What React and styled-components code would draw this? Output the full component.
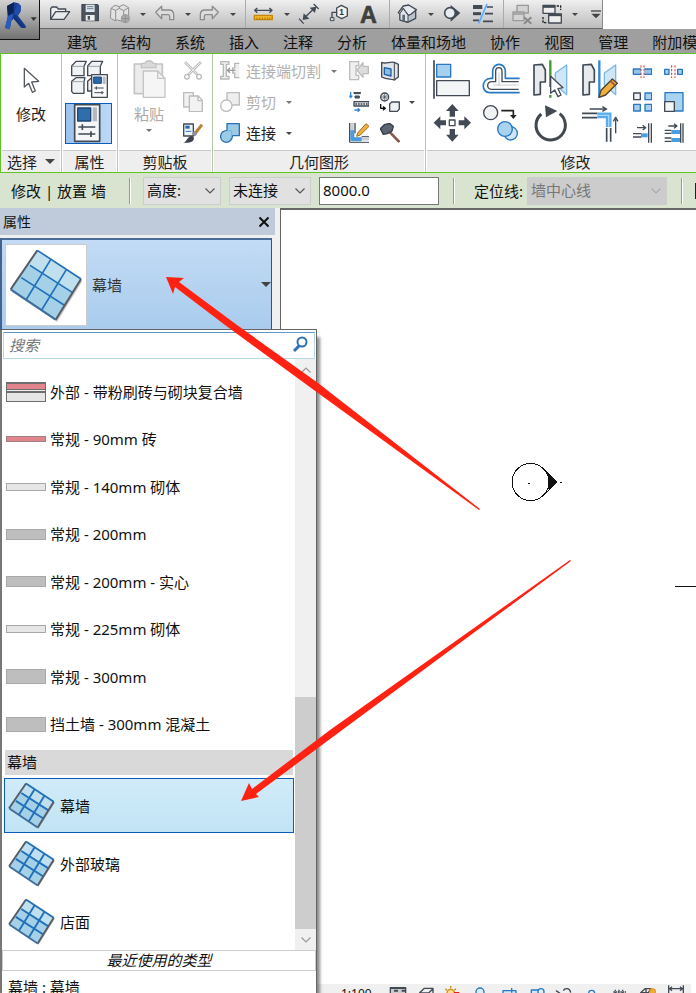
import React, { useState } from 'react';
import styled, { createGlobalStyle, css } from 'styled-components';

const fonts = {
  ui: `'Noto Sans', 'Noto Sans CJK SC', sans-serif`,
  cjk: `'Noto Sans CJK SC', 'Noto Sans', sans-serif`,
};

const colors = {
  green: '#5ec421',
  slate: '#414a55',
  blue: '#2a78c2',
  accent: '#0a5cb8',
  faded: '#c4c4c4',
  red: '#ff2213',
  edge: '#666666',
};

const GlobalStyle = createGlobalStyle`
  * {
    box-sizing: border-box;
  }
  body {
    margin: 0;
    background: #fff;
    color: #111;
    font-family: ${fonts.ui};
    font-size: 15px;
    line-height: 20px;
  }
  button, input, select {
    font: inherit;
    color: inherit;
  }
  button {
    padding: 0;
    border: 0;
    background: none;
    white-space: nowrap;
  }
  ul {
    margin: 0;
    padding: 0;
    list-style: none;
  }
  svg {
    display: block;
    flex: none;
  }
`;

const flexCenter = css`
  display: flex;
  align-items: center;
  justify-content: center;
`;

const Shell = styled.div`
  position: relative;
  display: flex;
  flex-direction: column;
  height: 100vh;
  overflow: hidden;
`;

/* ---- title bar ---- */
const TitleBar = styled.header`
  display: flex;
  flex: none;
  height: 29px;
`;
const QuickAccess = styled.div`
  display: flex;
  flex: none;
  width: 603px;
  padding-left: 45px;
  border-right: 1px solid #8a8a8a;
  border-bottom: 1px solid #666;
  background: linear-gradient(#efefef, #bdbdbd);
`;
const QatButton = styled.button`
  flex: none;
  ${flexCenter};
  width: 30px;
`;
const QatArrow = styled.button`
  flex: none;
  ${flexCenter};
  width: 15px;
`;
const QatDivider = styled.span`
  flex: none;
  width: 9px;
  border-right: 3px solid transparent;
  background: linear-gradient(#aaa, #aaa) right / 1px 100% no-repeat;
  background-origin: padding-box;
`;
const AppMenuButton = styled.button`
  position: absolute;
  top: 0;
  left: 0;
  z-index: 2;
  width: 40px;
  height: 40px;
  border-right: 1px solid #111;
  border-bottom: 1px solid #111;
  background: linear-gradient(#d2d2d2, #727272);
`;

/* ---- ribbon ---- */
const Tabs = styled.nav`
  display: flex;
  flex: none;
  gap: 24px;
  height: 24px;
  padding-left: 67px;
  background: #9f9f9f;
  overflow: hidden;
`;
const Tab = styled.button`
  flex: none;
  padding-top: 2px;
  font-family: ${fonts.cjk};
  line-height: 20px;
`;
const Ribbon = styled.section`
  display: flex;
  flex: none;
  height: 120px;
  border: 1px solid ${colors.green};
  border-right: 0;
  overflow: hidden;
`;
const Panel = styled.div`
  display: flex;
  flex: ${({ $width }) => ($width ? 'none' : '1 0 300px')};
  flex-direction: column;
  width: ${({ $width }) => ($width ? `${$width}px` : 'auto')};
  border-right: 1px solid #b5c9ad;
`;
const PanelBody = styled.div`
  display: flex;
  flex: 1;
  padding: ${({ $pad }) => $pad || 0};
  gap: ${({ $gap }) => $gap || 0}px;
`;
const PanelTitle = styled.div`
  ${flexCenter};
  gap: 8px;
  height: 22px;
  margin: 0 1px;
  border-top: 1px solid #c9c9c9;
  background: #eee;
  color: #222;
`;
const LargeTool = styled.button`
  display: flex;
  flex: none;
  flex-direction: column;
  align-items: center;
  width: ${({ $width }) => $width}px;
  color: ${({ disabled }) => (disabled ? '#aaa' : '#222')};
`;
const ToolLabel = styled.span`
  margin: 6px 0 5px;
`;
const ToolStack = styled.div`
  display: flex;
  flex-direction: column;
  gap: ${({ $gap }) => $gap}px;
`;
const PaletteTool = styled.button`
  ${flexCenter};
  width: 47px;
  height: 41px;
  border: 1px solid ${({ $active }) => ($active ? colors.accent : 'transparent')};
  background: ${({ $active }) => ($active ? 'linear-gradient(90deg, #9cc3ee, #bcd8f5)' : 'none')};
`;
const SmallTool = styled.button`
  display: flex;
  align-items: center;
  gap: 6px;
  height: 20px;
  color: ${({ disabled }) => (disabled ? '#b0b0b0' : '#222')};
  > svg + svg {
    margin-left: 3px;
  }
`;
const ToolText = styled.span`
  margin-right: 4px;
`;
const ToolGrid = styled.div`
  display: grid;
  flex: none;
  align-content: start;
  grid-template-columns: ${({ $cols }) => $cols};
  column-gap: ${({ $x }) => $x || 0}px;
  row-gap: ${({ $y }) => $y}px;
  padding-top: ${({ $top }) => $top || 0}px;
`;

/* ---- options bar ---- */
const OptionsBar = styled.form`
  display: flex;
  flex: none;
  align-items: center;
  height: 35px;
  padding-left: 11px;
  background: #d8e4d0;
  overflow: hidden;
`;
const OptionsTitle = styled.span`
  flex: none;
  width: 118px;
`;
const Divider = styled.span`
  flex: none;
  width: 2px;
  height: 26px;
  margin-right: ${({ $after }) => $after}px;
  border-left: 1px solid #999;
  border-right: 1px solid #fff;
`;
const SelectBox = styled.span`
  display: grid;
  flex: none;
  align-items: center;
  width: ${({ $width }) => $width}px;
  height: 28px;
  margin-right: ${({ $after }) => $after}px;
  border: 1px solid #ccc;
  background: ${({ $disabled }) => ($disabled ? '#ccc' : '#e1e1e1')};
  color: ${({ $disabled }) => ($disabled ? '#777' : '#111')};
  > * {
    grid-area: 1 / 1;
  }
  > svg {
    justify-self: end;
    margin-right: 4px;
    pointer-events: none;
  }
`;
const Select = styled.select`
  width: 100%;
  padding: 0 0 2px 3px;
  border: 0;
  background: none;
  appearance: none;
  opacity: 1;
`;
const HeightInput = styled.input`
  flex: none;
  width: 120px;
  height: 28px;
  margin-right: 14px;
  padding: 0 3px 2px;
  border: 1px solid #777;
  background: #fff;
`;
const OptionLabel = styled.label`
  flex: none;
  width: 53px;
`;
const ChainCheck = styled.input`
  flex: none;
  width: 16px;
  height: 16px;
  margin: 0;
  border: 1px solid #222;
  background: #fff;
  appearance: none;
`;

/* ---- workspace ---- */
const Workspace = styled.main`
  display: flex;
  flex: 1;
  min-height: 0;
`;
const Properties = styled.aside`
  display: flex;
  flex: none;
  flex-direction: column;
  width: 280px;
  background: #f0f0f0;
`;
const PropertiesHeader = styled.div`
  display: flex;
  align-items: center;
  justify-content: space-between;
  width: 275px;
  height: 27px;
  padding: 0 5px 0 3px;
  background: #bfcbda;
  font-size: 14px;
`;
const TypeSelector = styled.button`
  display: flex;
  align-items: center;
  width: 272px;
  height: 92px;
  margin-top: 3px;
  padding: 0 0 0 3px;
  border: 1px solid ${colors.accent};
  border-top: 2px solid #4b6d99;
  border-left: 2px solid #44648f;
  background: linear-gradient(#c3dbf5, #a9cced);
  color: #333;
  text-align: left;
`;
const TypeThumb = styled.span`
  ${flexCenter};
  width: 82px;
  height: 82px;
  margin-right: 5px;
  border: 1px solid #ccc;
  background: #fff;
`;
const TypeName = styled.span`
  flex: 1;
`;
const MenuAnchor = styled.div`
  position: relative;
  flex: 1;
  min-height: 0;
  border-left: 2px solid #777;
`;
const TypeMenu = styled.div`
  position: absolute;
  z-index: 3;
  top: -1px;
  bottom: 0;
  left: 0;
  display: flex;
  flex-direction: column;
  width: 315px;
  border-top: 1px solid ${colors.edge};
  border-right: 1px solid ${colors.edge};
  background: #fff;
  box-shadow: 3px 8px 3px rgba(0, 0, 0, 0.45);
`;
const SearchBox = styled.label`
  display: flex;
  flex: none;
  align-items: center;
  height: 27px;
  margin: 2px 1px 0;
  padding: 0 5px 2px;
  border: 1px solid #b9d9ea;
  border-top-color: #5d97c8;
`;
const SearchInput = styled.input`
  flex: 1;
  min-width: 0;
  padding: 0;
  border: 0;
  outline: 0;
  background: none;
  font-style: italic;
  &::placeholder {
    color: #777;
    opacity: 1;
  }
`;
const ListArea = styled.div`
  display: flex;
  flex: none;
  height: 591px;
`;
const ListColumn = styled.div`
  flex: 1;
  padding: 9px 1px 0 2px;
`;
const WallList = styled.ul`
  display: grid;
  grid-auto-rows: 1fr;
  height: 380px;
`;
const WallItem = styled.button`
  display: flex;
  align-items: center;
  gap: 4px;
  width: 100%;
  height: 100%;
  padding-left: 2px;
`;
const GroupTitle = styled.h3`
  height: 25px;
  margin: 2px 1px 3px;
  padding-left: 2px;
  background: #d9d9d9;
  font-size: 15px;
  font-weight: 400;
  line-height: 24px;
`;
const CurtainList = styled.ul`
  display: grid;
  gap: 3px;
`;
const CurtainItem = styled.button`
  display: flex;
  align-items: center;
  gap: 5px;
  width: 100%;
  height: 55px;
  padding-left: 3px;
  border: 1px solid ${({ $selected }) => ($selected ? colors.accent : 'transparent')};
  background: ${({ $selected }) => ($selected ? 'linear-gradient(#d1ebfa, #c1e4f5)' : 'none')};
`;
const ScrollBar = styled.div`
  display: flex;
  flex: none;
  flex-direction: column;
  width: 21px;
  background: #f0f0f0;
`;
const ScrollArrow = styled.button`
  ${flexCenter};
  height: 21px;
`;
const ScrollThumb = styled.div`
  height: 232px;
  margin-top: auto;
  background: #cdcdcd;
`;
const RecentTitle = styled.div`
  flex: none;
  height: 21px;
  border: 1px solid #ccc;
  font-style: italic;
  line-height: 19px;
  text-align: center;
`;
const RecentItem = styled.button`
  flex: none;
  height: 32px;
  padding-left: 6px;
  text-align: left;
`;

const ViewPane = styled.section`
  display: flex;
  flex: 1;
  flex-direction: column;
  min-width: 0;
  border-top: 2px solid ${colors.edge};
  border-left: 1px solid ${colors.edge};
`;
const Drawing = styled.div`
  flex: 1;
  min-height: 0;
  overflow: hidden;
  background: #fff;
`;
const ViewControls = styled.footer`
  display: flex;
  flex: none;
  height: 9px;
  margin-right: 5px;
  padding-left: 60px;
  background: #f0f0f0;
  overflow: hidden;
`;
const ScaleButton = styled.button`
  flex: none;
  align-self: flex-start;
  width: 43px;
  font-size: 12px;
  line-height: 20px;
  text-align: left;
`;
const ViewControl = styled.button`
  flex: none;
  align-self: flex-start;
  width: 28px;
`;
const Markup = styled.svg`
  position: absolute;
  z-index: 5;
  top: 0;
  left: 0;
  pointer-events: none;
`;

const Icon = ({ x, y, w, h = w, children }) => (
  <svg
    width={w}
    height={h}
    viewBox={`${x} ${y} ${w * 3} ${h * 3}`}
    fill="none"
    stroke={colors.slate}
    strokeWidth="4"
    strokeLinejoin="round"
    aria-hidden="true"
  >
    {children}
  </svg>
);

const Triangle = ({ size = 7, color = '#444' }) => (
  <svg width={size} height={Math.ceil(size / 2)} viewBox="0 0 8 4" preserveAspectRatio="none" aria-hidden="true">
    <path d="M0 0h8L4 4z" fill={color} />
  </svg>
);

const Chevron = ({ up, color = '#555' }) => (
  <svg width="12" height="8" viewBox="0 0 12 8" aria-hidden="true">
    <path d={up ? 'M1.500 6.500L6 2l4.500 4.500' : 'M1.500 1.500L6 6l4.500-4.500'} fill="none" stroke={color} strokeWidth="1.200" />
  </svg>
);

const CurtainWallIcon = ({ size, fine }) => (
  <svg width={size} height={size} viewBox="28 229 222 222" aria-hidden="true">
    <path d="M117 242l131 86-76 122L37 361z" fill="#000" opacity=".25" />
    <path d="M113 236l131 86-76 122L33 353z" fill="#a5d1e8" />
    <path d="M113 236l131 86-25 40L88 275z" fill="#d2e9f5" opacity=".6" />
    <g stroke="#2171ba" strokeWidth={fine ? 9 : 5} fill="none">
      <path d="M153 264L79 385M200 294l-74 121M91 281l128 82M65 318l128 82" />
      <path d="M113 236l131 86" />
    </g>
    <path d="M113 236L33 353M244 322l-76 122" stroke="#555d66" strokeWidth={fine ? 9 : 6} />
    <path d="M33 353l135 91" stroke="#3d6d9c" strokeWidth={fine ? 8 : 6} />
  </svg>
);

const RevitLogo = () => (
  <Icon x={0} y={0} w={39}>
    <g stroke="none">
      <path d="M21 18l21-11 13 3 8 8-1 16-8 13 24 32-3 5-12-1-22-27-7 6-5 26-14-4 8-34z" fill="#193f95" />
      <path d="M21 18l21-11-1 33-17 8z" fill="#0d2456" />
      <path d="M41 40l13-30 8 8-1 16-8 13z" fill="#1f4cab" />
      <path d="M24 48l17-8-7 22-5 26-14-4z" fill="#285ac0" />
      <path d="M41 40l37 44-12-1-25-27z" fill="#15347e" />
    </g>
    <path d="M92 52h18l-9 11z" fill="#333" stroke="none" />
  </Icon>
);

/* Quick access glyphs, drawn on a 3x grid of the toolbar */
const QatOpen = () => (
  <Icon x={135} y={0} w={30} h={28}>
    <path d="M152 58V26l4-5h14l5 6h22v8" fill="#eee" />
    <path d="M152 58l15-23h42l-17 23z" fill="#e8ebee" />
  </Icon>
);
const QatSave = () => (
  <Icon x={225} y={0} w={30} h={28}>
    <path d="M246 14h46l3 3v45h-49z" fill="#4c545f" />
    <path d="M257 14h27v22h-27z" fill="#dce6ef" stroke="none" />
    <path d="M261 20h19M261 26h19" strokeWidth="2" />
    <path d="M257 45h27v17h-27z" fill="#eee" stroke="none" />
    <path d="M263 48h7v11h-7z" fill="#4c545f" stroke="none" />
  </Icon>
);
const QatCube = () => (
  <Icon x={315} y={0} w={30} h={28}>
    <g stroke="#8f8f8f" strokeWidth="3" fill="#e2e2e2">
      <path d="M333 25l12-9 13 4 12-6 16 9v28l-19 13-14-4-8 2-14-8z" />
      <path d="M333 25l14 6 11-6 13 7 15-9M347 31v29M371 32v30M358 25v-5" />
    </g>
    <circle cx="376" cy="56" r="12" fill="#aaa" stroke="#999" strokeWidth="3" />
    <path d="M364 56h24M376 44v24" stroke="#888" strokeWidth="2" />
  </Icon>
);
const QatUndo = () => (
  <Icon x={450} y={0} w={30} h={28}>
    <path d="M467 37l18-18v11h22c10 0 14 7 14 14v15h-12V49c0-3-2-5-5-5h-19v12z" fill="#ddd" stroke="#8c8c8c" />
  </Icon>
);
const QatRedo = () => (
  <Icon x={585} y={0} w={30} h={28}>
    <path d="M655 37l-18-18v11h-22c-10 0-14 7-14 14v15h12V49c0-3 2-5 5-5h19v12z" fill="#ddd" stroke="#8c8c8c" />
  </Icon>
);
const QatMeasure = () => (
  <Icon x={57} y={0} w={30} h={28}>
    <path d="M75 31h50M82 24l-8 7 8 7M118 24l8 7-8 7" />
    <path d="M73 46h54v13H73z" fill="#f0b429" stroke="#c98608" />
    <path d="M81 53v5M89 53v5M97 53v5M105 53v5M113 53v5M120 53v5" stroke="#7c5200" strokeWidth="2" />
  </Icon>
);
const QatDimension = () => (
  <Icon x={192} y={0} w={30} h={28}>
    <path d="M222 55l31-30" />
    <path d="M218 60l3-20 17 16zM259 20l-20 3 16 16z" fill={colors.slate} stroke="none" />
    <path d="M207 56l14 15M251 12l15 15" />
  </Icon>
);
const QatTag = () => (
  <Icon x={282} y={0} w={30} h={28}>
    <path d="M320 24l14-8 18 9v23l-17 8-15-8z" fill="#f2f2f2" />
    <path d="M319 37h-13v19" />
    <path d="M301 53h11v9h-11z" fill="#ddd" strokeWidth="3" />
    <text x="335" y="45" fill="#333" stroke="none" fontFamily="Liberation Sans, sans-serif" fontWeight="700" fontSize="25" textAnchor="middle">1</text>
  </Icon>
);
const QatText = () => (
  <Icon x={372} y={0} w={30} h={28}>
    <text x="415" y="69" fill="#3f3f3f" stroke="#3f3f3f" strokeWidth="2" fontFamily="Liberation Sans, sans-serif" fontWeight="700" fontSize="70" textAnchor="middle">A</text>
  </Icon>
);
const QatHouse = () => (
  <Icon x={489} y={0} w={30} h={28}>
    <path d="M510 40v20l23 7 24-12V32l-8-4" fill="#b9c2cd" />
    <path d="M505 38l15-20 16-3 23 14-15 13-9 4-15-20-9 16z" fill="#e6ebf0" />
    <path d="M510 40l10-14 14 20v20l-24-6z" fill="#dfe4ea" strokeWidth="3" />
    <path d="M517 44h8v20l-8-3z" fill="#5d6774" stroke="none" />
  </Icon>
);
const QatSection = () => (
  <Icon x={624} y={0} w={30} h={28}>
    <path d="M662 15l29 24-29 26z" fill={colors.slate} stroke="none" />
    <circle cx="660" cy="39" r="16" fill="#e9edf1" strokeWidth="5" />
  </Icon>
);
const QatThin = () => (
  <Icon x={24} y={0} w={30} h={28}>
    <path d="M39 21h28" strokeWidth="12" />
    <path d="M39 41h24" strokeWidth="9" />
    <path d="M39 61h18M80 21h19M75 41h24M69 64h30" strokeWidth="5" />
    <path d="M81 12L56 70" stroke="#5aaeff" strokeWidth="5" />
  </Icon>
);
const QatCloseHidden = () => (
  <Icon x={141} y={0} w={30} h={28}>
    <g stroke="#9a9a9a" fill="#d3d3d3">
      <path d="M171 16h34v23h-34z" />
      <path d="M159 36h33v26h-33zM159 42h33" />
      <path d="M192 52l22 19M214 52l-22 19" stroke="#888" strokeWidth="6" />
    </g>
  </Icon>
);
const QatSwitch = () => (
  <Icon x={231} y={0} w={30} h={28}>
    <path d="M249 16h36v24h-36z" fill="#eee" />
    <path d="M249 20h36" strokeWidth="7" />
    <path d="M266 42h38v27h-38z" fill="#eee" />
    <path d="M266 45h38" strokeWidth="7" />
    <path d="M290 18h12v12M249 51v17h12" stroke="#222" strokeDasharray="7 3" />
  </Icon>
);
const QatCustomize = () => (
  <Icon x={366} y={0} w={20} h={28}>
    <path d="M378 33h30" stroke="#444" />
    <path d="M379 41h28l-14 14z" fill="#444" stroke="none" />
  </Icon>
);

/* Ribbon glyphs */
const CursorIcon = () => (
  <Icon x={61} y={39} w={20} h={31}>
    <path d="M71 43v56l13-11 11 27 9-4-11-27 21-2z" fill="#fff" stroke="#565b62" />
  </Icon>
);
const TypePropsIcon = () => (
  <Icon x={202} y={19} w={40}>
    <g fill="#f1f2f4">
      <path d="M210 40l13-14h31l-7 15v28h-37z" />
      <path d="M258 40l12-14h33l-7 15v28h-38z" />
      <path d="M210 86l13-11h27l-3 11v36h-32l-5-6z" />
      <path d="M258 86l12-11h25v40h-37z" />
      <path d="M210 41h37M258 41h38M210 87h37" strokeWidth="3" stroke="#9aa0a8" />
    </g>
    <path d="M270 66h47v68h-47z" fill="#fbfbfb" />
    <path d="M276 73h23v19h-23z" fill="#2d68a8" stroke="#1c4a80" strokeWidth="3" />
    <path d="M303 72h9v22h-9z" fill="#b7bcc4" stroke="none" />
    <path d="M278 106h28M284 101v10M278 120h28M301 115v10" strokeWidth="3" />
  </Icon>
);
const PropertiesIcon = () => (
  <Icon x={205} y={156} w={40} h={39}>
    <path d="M222 158h75v110h-75z" fill="#f5f6f8" strokeWidth="5" />
    <path d="M231 168h39v39h-39z" fill="#2f6dad" stroke="#1c4676" />
    <path d="M276 166h13v42h-13z" fill="#b5b9c1" stroke="none" />
    <path d="M233 225h51M245 217v17M233 246h51M271 238v17" strokeWidth="5" />
  </Icon>
);
const PasteIcon = () => (
  <Icon x={387} y={15} w={40}>
    <g stroke={colors.faded}>
      <path d="M403 33h84v89h-84z" fill="#ececec" strokeWidth="5" />
      <path d="M424 44V32l12-2c2-9 20-9 22 0l10 2v12z" fill="#d9d9d9" strokeWidth="4" />
      <path d="M430 54h43l22 22v57h-65z" fill="#f5f5f5" />
      <path d="M473 54v22h22" />
    </g>
  </Icon>
);
const CutIcon = () => (
  <Icon x={549} y={27} w={20}>
    <g stroke="#bdbdbd">
      <path d="M555 30l39 40M603 30l-40 40" strokeWidth="8" />
      <path d="M555 30l39 40M603 30l-40 40" stroke="#eee" strokeWidth="3" />
      <circle cx="561" cy="74" r="7" />
      <circle cx="597" cy="74" r="7" />
    </g>
  </Icon>
);
const CopyClipIcon = () => (
  <Icon x={549} y={120} w={20}>
    <g stroke="#bcbcbc" fill="#f2f2f2">
      <path d="M551 122h29v43h-29z" />
      <path d="M568 132h27l12 13v34h-39zM594 132v14h13" />
    </g>
  </Icon>
);
const MatchIcon = () => (
  <Icon x={549} y={213} w={20}>
    <path d="M551 216h29v36h-29z" fill="#eef3f8" />
    <path d="M556 221h13v9h-13z" fill="#2a68ae" stroke="none" />
    <path d="M557 238h17" stroke={colors.blue} strokeWidth="3" />
    <path d="M606 218l-22 28" stroke="#b78232" strokeWidth="9" />
    <path d="M588 241l-8 8" stroke="#8a929c" strokeWidth="12" />
    <path d="M549 272c10 0 13-19 25-20 9 0 10 10 4 15-8 6-18 5-29 5z" fill="#3a424d" stroke="none" />
  </Icon>
);
const CopeIcon = () => (
  <Icon x={30} y={27} w={20}>
    <g stroke="#b9b9b9" fill="#eee">
      <path d="M32 29h25v8h-8v36h8v8H32v-8h8V37h-8z" />
      <path d="M88 34H74v14h-6v15h6v14h14" />
      <path d="M76 55H53M60 48l-8 7 8 7" stroke="#999" />
    </g>
  </Icon>
);
const CutGeometryIcon = () => (
  <Icon x={30} y={120} w={20}>
    <g stroke="#bdbdbd">
      <path d="M51 122h37v37H51z" fill="#eee" />
      <circle cx="49" cy="161" r="17" fill="#fff" />
    </g>
  </Icon>
);
const JoinIcon = () => (
  <Icon x={30} y={213} w={20}>
    <path d="M51 215h37v36H68c-2 12-10 20-20 20-21-2-23-33 3-36z" fill="#9ccbe7" stroke="#2b71b2" />
    <path d="M51 236h14v16" stroke="#7fb4d8" strokeWidth="3" />
  </Icon>
);
const WallJoinIcon = () => (
  <Icon x={417} y={27} w={20}>
    <g stroke="#bcbcbc" fill="#f0f0f0">
      <path d="M419 29h27v12h-8v29h8v13h-27z" />
      <path d="M475 43h-16V32l-18 22 18 22V65h16z" fill="#ddd" />
    </g>
  </Icon>
);
const FaceIcon = () => (
  <Icon x={510} y={27} w={20}>
    <path d="M515 31c13 7 24-4 38 0l12 6v38l-12 9c-14-4-22-1-38-9z" fill="#e1e4e8" />
    <path d="M553 31v52" strokeWidth="3" />
    <path d="M523 47l20 4v21l-20-5z" fill="#8cbde0" stroke="#1d62a7" />
  </Icon>
);
const BeamIcon = () => (
  <Icon x={417} y={120} w={20}>
    <path d="M422 120v16M418 131l4 6 5-6M433 174h15M443 169l6 5-6 5" stroke="#2f88dd" />
    <path d="M432 120h19v5h-19zM435 132h13v6h-13z" fill="#555" strokeWidth="3" />
    <path d="M432 149h45v13h-45z" fill="#ddd" />
    <path d="M436 156h41" strokeDasharray="5 3" />
  </Icon>
);
const SplitFaceIcon = () => (
  <Icon x={510} y={120} w={20}>
    <circle cx="524" cy="135" r="12" fill="#eee" />
    <path d="M516 127l16 16M532 127l-16 16M524 123v24M512 135h24" strokeWidth="2" />
    <path d="M512 156v13h12M519 164l7 5-7 6" stroke="#111" />
    <path d="M539 156l6-6h23v21l-6 7h-23z" fill="#eef0f3" />
  </Icon>
);
const SketchIcon = () => (
  <Icon x={417} y={213} w={20}>
    <path d="M419 213v58M435 213v31" strokeWidth="4" />
    <path d="M427 213v48h50" stroke="#c9ced4" strokeWidth="9" />
    <path d="M427 235v27h28" stroke="#4a9be0" strokeWidth="12" />
    <path d="M419 271h58M455 254h22" strokeWidth="3" />
    <path d="M443 243l25-28 9 8-26 26-11 4z" fill="#efb13d" stroke="#9c6a1c" strokeWidth="3" />
  </Icon>
);
const HammerIcon = () => (
  <Icon x={510} y={213} w={20}>
    <path d="M535 236l33 34" stroke="#855d50" strokeWidth="8" />
    <path d="M511 230l12-12 16-4 11 9-4 14-14 8-12 2z" fill="#5b6672" stroke="#343c47" />
  </Icon>
);
const AlignIcon = () => (
  <Icon x={21} y={21} w={40}>
    <path d="M27 25v115" strokeWidth="5" />
    <path d="M35 37h42v38H35z" fill="#a6d0ee" stroke={colors.blue} />
    <path d="M35 86h98v45H35z" fill="#f4f5f7" />
  </Icon>
);
const OffsetIcon = () => (
  <Icon x={168} y={21} w={40}>
    <path d="M284 122h-90c-26-1-26-41 3-43h6V58c0-28 38-28 38 0v21h43" stroke="#2a78c2" strokeWidth="5" />
    <path d="M281 112h-82c-15 0-15-23 2-23h11V58c0-15 19-15 19 0v31h50" />
    <path d="M281 99h-76M222 62v37" stroke="#a9afb7" strokeWidth="2" />
  </Icon>
);
const MirrorIcon = ({ x, pencil }) => (
  <Icon x={x} y={21} w={40}>
    <g transform={`translate(${x - 315} 0)`}>
      <path d="M327 39l25-2 9 17v36h-15v37l-19 2z" fill="#e8eaee" strokeWidth="5" />
      <path d="M425 39l-34 24v35l34 30z" fill="#cfe6f7" stroke="#7db7e2" />
      {pencil ? (
        <>
          <path d="M376 25v112" stroke="#2f86dd" strokeWidth="7" />
          <path d="M375 136l6-21 34-34 15 13-35 35z" fill="#eeb03a" stroke="#4c4030" />
          <path d="M409 87l14 13" stroke="#a25a4a" strokeWidth="6" />
        </>
      ) : (
        <>
          <path d="M376 25v80M376 129v8" stroke="#3c9b2f" strokeWidth="7" />
          <path d="M377 73v51l12-10 10 20 9-5-9-19 15-3z" fill="#fff" />
        </>
      )}
    </g>
  </Icon>
);
const MoveIcon = () => (
  <Icon x={21} y={156} w={40}>
    <g fill={colors.slate} stroke="none">
      <path d="M82 156l19 21H90v17H74v-17H63zM82 269l19-21H90v-17H74v17H63zM26 212l20-19v12h17v15H46v12zM138 212l-20-19v12h-17v15h17v12z" />
    </g>
    <path d="M73 204h17v17H73z" fill="#fff" />
  </Icon>
);
const CopyIcon = () => (
  <Icon x={168} y={156} w={40}>
    <circle cx="197" cy="182" r="21" fill="#f1f2f4" />
    <path d="M229 176h36v18" strokeWidth="5" stroke="#222" />
    <path d="M255 189h20l-10 12z" fill="#222" stroke="none" />
    <circle cx="257" cy="244" r="20" fill="#cfe6f7" stroke={colors.blue} />
    <circle cx="240" cy="231" r="22" fill="#a9d4ef" stroke={colors.blue} />
  </Icon>
);
const RotateIcon = () => (
  <Icon x={315} y={156} w={40}>
    <path d="M349 186a44 44 0 1 0 55-1" strokeWidth="9" stroke="#414850" />
    <path d="M360 160l37 17-34 19z" fill="#414850" stroke="none" />
  </Icon>
);
const TrimIcon = () => (
  <Icon x={462} y={156} w={40}>
    <path d="M494 171h48M532 164l13 7-13 7M572 244v-42M565 208l7-12 7 12" strokeWidth="4" />
    <path d="M471 184h46M471 197h46M545 228v41M557 228v41" strokeWidth="5" />
    <path d="M517 190h34v35" stroke="#58acec" strokeWidth="17" strokeLinejoin="miter" />
    <path d="M517 190h34v35" stroke="#a8d7fb" strokeWidth="4" strokeLinejoin="miter" />
  </Icon>
);
const SplitIcon = () => (
  <Icon x={621} y={27} w={20}>
    <path d="M625 51h55v16h-55z" fill="#8fc3e9" stroke={colors.blue} />
    <path d="M653 39v40" stroke="#fff" strokeWidth="10" />
    <path d="M648 40v38M657 40v38" stroke="#d13b3b" strokeWidth="3" strokeDasharray="7 4" />
  </Icon>
);
const SplitGapIcon = () => (
  <Icon x={717} y={27} w={20}>
    <path d="M719 52h13v15h-13zM758 52h14v15h-14z" fill="#a8d0ec" stroke={colors.blue} />
    <path d="M740 40v38M750 40v38" stroke="#d13b3b" strokeWidth="3" strokeDasharray="7 4" />
  </Icon>
);
const ArrayIcon = () => (
  <Icon x={621} y={120} w={20}>
    <path d="M626 123h20v20h-20z" fill="#eef0f3" />
    <path d="M660 123h20v20h-20zM626 157h20v20h-20zM660 157h20v20h-20z" fill="#a8d0ec" stroke={colors.blue} />
  </Icon>
);
const ScaleIcon = () => (
  <Icon x={717} y={120} w={20}>
    <path d="M720 122h54v55h-54z" fill="#a8d4f0" stroke={colors.blue} />
    <path d="M719 149h29v29h-29z" fill="#f5f6f8" />
  </Icon>
);
const TrimSingleIcon = () => (
  <Icon x={621} y={213} w={20}>
    <path d="M636 227h24M653 220l9 7-9 7M671 214v58M679 214v58" />
    <path d="M624 245h25M624 255h25" />
    <path d="M648 250h20" stroke="#4a9fe3" strokeWidth="12" />
  </Icon>
);
const TrimMultiIcon = () => (
  <Icon x={717} y={213} w={20}>
    <path d="M730 222h24M747 215l9 7-9 7M767 214v58M774 214v58M719 235h20M719 244h20M719 258h20M719 268h20" />
    <path d="M739 240h26M739 264h26" stroke="#4a9fe3" strokeWidth="12" />
  </Icon>
);

const SearchIcon = () => (
  <svg width="17" height="17" viewBox="0 0 17 17" fill="none" stroke="#2f6fb8" aria-hidden="true">
    <circle cx="10" cy="6" r="4.500" strokeWidth="2" />
    <path d="M7 10l-5 5" strokeWidth="3" />
  </svg>
);

const WallSwatch = ({ kind }) => {
  const heights = { brick: 6, block: 8, solid: 11, thick: 15, compound: 20 };
  const fills = { brick: '#e2848b', block: '#e6e6e6', solid: '#bebebe', thick: '#bebebe' };
  const h = heights[kind];
  return (
    <svg width="40" height={h} shapeRendering="crispEdges" aria-hidden="true">
      {kind === 'compound' ? (
        <>
          <rect width="40" height="20" fill="#6e6e6e" />
          <rect x="1" y="2" width="38" height="5" fill="#e2848b" />
          <rect x="1" y="8" width="38" height="1" fill="#eee" />
          <rect x="1" y="11" width="38" height="8" fill="#e6e6e6" />
        </>
      ) : (
        <>
          <rect width="40" height={h} fill={kind === 'brick' ? '#a07f82' : '#a8a8a8'} />
          <rect x="1" y="1" width="38" height={h - 2} fill={fills[kind]} />
        </>
      )}
    </svg>
  );
};

const tabs = ['建筑', '结构', '系统', '插入', '注释', '分析', '体量和场地', '协作', '视图', '管理', '附加模块'];

const walls = [
  { name: '外部 - 带粉刷砖与砌块复合墙', kind: 'compound' },
  { name: '常规 - 90mm 砖', kind: 'brick' },
  { name: '常规 - 140mm 砌体', kind: 'block' },
  { name: '常规 - 200mm', kind: 'solid' },
  { name: '常规 - 200mm - 实心', kind: 'solid' },
  { name: '常规 - 225mm 砌体', kind: 'block' },
  { name: '常规 - 300mm', kind: 'thick' },
  { name: '挡土墙 - 300mm 混凝土', kind: 'thick' },
];

const curtainTypes = ['幕墙', '外部玻璃', '店面'];

const quickTools = [
  { label: '打开', glyph: QatOpen },
  { label: '保存', glyph: QatSave },
  { label: '同步', glyph: QatCube, more: true },
  { label: '放弃', glyph: QatUndo, more: true },
  { label: '重做', glyph: QatRedo, more: true, divider: true },
  { label: '测量', glyph: QatMeasure, more: true },
  { label: '对齐尺寸标注', glyph: QatDimension },
  { label: '按类别标记', glyph: QatTag },
  { label: '文字', glyph: QatText, divider: true },
  { label: '三维视图', glyph: QatHouse, more: true },
  { label: '剖面', glyph: QatSection },
  { label: '细线', glyph: QatThin, divider: true },
  { label: '关闭隐藏窗口', glyph: QatCloseHidden },
  { label: '切换窗口', glyph: QatSwitch, more: true },
];

const viewGlyphs = [
  <g><path d="M211 53h46v20h-46z" fill="#ccc" /><path d="M211 54h46M222 62h12M245 62h12" strokeWidth="6" /></g>,
  <path d="M298 69l15-14h26v14M298 69h28l13-13" fill="#eee" />,
  <g stroke="#d48a18"><circle cx="392" cy="69" r="11" fill="#ffe08a" /><path d="M392 48v7M376 56l5 5M408 56l-5 5" /><path d="M402 68h16" stroke="#d22" /></g>,
  <circle cx="480" cy="66" r="12" stroke={colors.blue} fill="#dceefa" />,
  <path d="M549 62h39v12h-39zM575 54v14" stroke={colors.blue} fill="#cfe6f7" />,
  <g stroke={colors.blue}><path d="M634 60h22v12h-22z" fill="#cfe6f7" /><circle cx="663" cy="65" r="9" fill="#dceefa" /></g>,
  <path d="M708 62l12 8M730 62c5-10 20-8 22 6" />,
  <circle cx="815" cy="70" r="9" stroke={colors.blue} />,
  <path d="M880 66h38M886 59v12M897 59v12M908 59v12" strokeDasharray="5 2" />,
  <g><path d="M962 68l13-12h18l-8 12zM978 56v12" fill="#eee" /><circle cx="998" cy="65" r="8" fill="#f5ae35" stroke="#e79c22" /></g>,
  <path d="M1046 46v23M1090 46v23M1048 56h40M1056 50l-7 6 7 6M1080 50l7 6-7 6" />,
];

const QuickToolbar = () => (
  <QuickAccess>
    {quickTools.map(({ label, glyph: Glyph, more, divider }) => (
      <React.Fragment key={label}>
        <QatButton aria-label={label}>
          <Glyph />
        </QatButton>
        {more && (
          <QatArrow aria-label={`${label}选项`}>
            <Triangle size={6} />
          </QatArrow>
        )}
        {divider && <QatDivider />}
      </React.Fragment>
    ))}
    <QatButton aria-label="自定义快速访问工具栏">
      <QatCustomize />
    </QatButton>
  </QuickAccess>
);

const RibbonPanels = () => (
  <Ribbon>
    <Panel $width={61}>
      <PanelBody $pad="13px 0 0">
        <LargeTool $width={60}>
          <CursorIcon />
          <ToolLabel>修改</ToolLabel>
        </LargeTool>
      </PanelBody>
      <PanelTitle>
        选择 <Triangle size={10} />
      </PanelTitle>
    </Panel>

    <Panel $width={56}>
      <PanelBody $pad="4px 0 0 3px">
        <ToolStack $gap={4}>
          <PaletteTool aria-label="类型属性">
            <TypePropsIcon />
          </PaletteTool>
          <PaletteTool $active aria-label="属性">
            <PropertiesIcon />
          </PaletteTool>
        </ToolStack>
      </PanelBody>
      <PanelTitle>属性</PanelTitle>
    </Panel>

    <Panel $width={95}>
      <PanelBody $pad="4px 0 0 11px" $gap={14}>
        <LargeTool $width={40} disabled>
          <PasteIcon />
          <ToolLabel>粘贴</ToolLabel>
          <Triangle size={6} color="#777" />
        </LargeTool>
        <ToolGrid $cols="max-content" $y={11} $top={3}>
          <SmallTool aria-label="剪切到剪贴板" disabled><CutIcon /></SmallTool>
          <SmallTool aria-label="复制到剪贴板" disabled><CopyClipIcon /></SmallTool>
          <SmallTool aria-label="匹配类型属性"><MatchIcon /></SmallTool>
        </ToolGrid>
      </PanelBody>
      <PanelTitle>剪贴板</PanelTitle>
    </Panel>

    <Panel $width={213}>
      <PanelBody $pad="7px 0 0 7px">
        <ToolGrid $cols="118px 20px max-content" $x={11} $y={11}>
          <SmallTool disabled><CopeIcon /><ToolText>连接端切割</ToolText><Triangle size={6} color="#777" /></SmallTool>
          <SmallTool aria-label="墙连接" disabled><WallJoinIcon /></SmallTool>
          <SmallTool aria-label="拆分面"><FaceIcon /></SmallTool>
          <SmallTool disabled><CutGeometryIcon /><ToolText>剪切</ToolText><Triangle size={6} color="#777" /></SmallTool>
          <SmallTool aria-label="梁/柱连接"><BeamIcon /></SmallTool>
          <SmallTool aria-label="填色"><SplitFaceIcon /><Triangle size={6} /></SmallTool>
          <SmallTool><JoinIcon /><ToolText>连接</ToolText><Triangle size={6} /></SmallTool>
          <SmallTool aria-label="编辑轮廓"><SketchIcon /></SmallTool>
          <SmallTool aria-label="拆除"><HammerIcon /></SmallTool>
        </ToolGrid>
      </PanelBody>
      <PanelTitle>几何图形</PanelTitle>
    </Panel>

    <Panel>
      <PanelBody $pad="5px 0 0 6px" $gap={13}>
        <ToolGrid $cols="repeat(4, 40px)" $x={9} $y={5}>
          <LargeTool $width={40} aria-label="对齐"><AlignIcon /></LargeTool>
          <LargeTool $width={40} aria-label="偏移"><OffsetIcon /></LargeTool>
          <LargeTool $width={40} aria-label="镜像 - 拾取轴"><MirrorIcon x={315} /></LargeTool>
          <LargeTool $width={40} aria-label="镜像 - 绘制轴"><MirrorIcon x={462} pencil /></LargeTool>
          <LargeTool $width={40} aria-label="移动"><MoveIcon /></LargeTool>
          <LargeTool $width={40} aria-label="复制"><CopyIcon /></LargeTool>
          <LargeTool $width={40} aria-label="旋转"><RotateIcon /></LargeTool>
          <LargeTool $width={40} aria-label="修剪/延伸为角"><TrimIcon /></LargeTool>
        </ToolGrid>
        <ToolGrid $cols="repeat(2, 20px)" $x={12} $y={11} $top={2}>
          <SmallTool aria-label="拆分图元"><SplitIcon /></SmallTool>
          <SmallTool aria-label="用间隙拆分"><SplitGapIcon /></SmallTool>
          <SmallTool aria-label="阵列"><ArrayIcon /></SmallTool>
          <SmallTool aria-label="缩放"><ScaleIcon /></SmallTool>
          <SmallTool aria-label="修剪/延伸单个图元"><TrimSingleIcon /></SmallTool>
          <SmallTool aria-label="修剪/延伸多个图元"><TrimMultiIcon /></SmallTool>
        </ToolGrid>
      </PanelBody>
      <PanelTitle>修改</PanelTitle>
    </Panel>
  </Ribbon>
);

const Options = () => (
  <OptionsBar onSubmit={e => e.preventDefault()}>
    <OptionsTitle>修改 | 放置 墙</OptionsTitle>
    <Divider $after={12} />
    <SelectBox $width={78} $after={8}>
      <Select aria-label="高度方式" defaultValue="h">
        <option value="h">高度:</option>
        <option value="d">深度:</option>
      </Select>
      <Chevron />
    </SelectBox>
    <SelectBox $width={82} $after={8}>
      <Select aria-label="顶部约束" defaultValue="n">
        <option value="n">未连接</option>
      </Select>
      <Chevron />
    </SelectBox>
    <HeightInput aria-label="无连接高度" defaultValue="8000.0" />
    <Divider $after={19} />
    <OptionLabel htmlFor="location-line">定位线:</OptionLabel>
    <SelectBox $width={140} $after={14} $disabled>
      <Select id="location-line" disabled defaultValue="c">
        <option value="c">墙中心线</option>
      </Select>
      <Chevron color="#aaa" />
    </SelectBox>
    <Divider $after={12} />
    <ChainCheck type="checkbox" aria-label="链" />
  </OptionsBar>
);

const TypeDropdown = () => {
  const [selected, setSelected] = useState('幕墙');
  const [query, setQuery] = useState('');
  return (
    <TypeMenu>
      <SearchBox>
        <SearchInput aria-label="搜索" placeholder="搜索" value={query} onChange={e => setQuery(e.target.value)} />
        <SearchIcon />
      </SearchBox>
      <ListArea>
        <ListColumn>
          <WallList>
            {walls.map(({ name, kind }) => (
              <li key={name}>
                <WallItem>
                  <WallSwatch kind={kind} />
                  {name}
                </WallItem>
              </li>
            ))}
          </WallList>
          <GroupTitle>幕墙</GroupTitle>
          <CurtainList>
            {curtainTypes.map(name => (
              <li key={name}>
                <CurtainItem $selected={name === selected} onClick={() => setSelected(name)}>
                  <CurtainWallIcon size={47} fine />
                  {name}
                </CurtainItem>
              </li>
            ))}
          </CurtainList>
        </ListColumn>
        <ScrollBar>
          <ScrollArrow aria-label="向上滚动"><Chevron up color="#999" /></ScrollArrow>
          <ScrollThumb />
          <ScrollArrow aria-label="向下滚动"><Chevron color="#999" /></ScrollArrow>
        </ScrollBar>
      </ListArea>
      <RecentTitle>最近使用的类型</RecentTitle>
      <RecentItem>幕墙 : 幕墙</RecentItem>
    </TypeMenu>
  );
};

const PropertiesPalette = () => (
  <Properties>
    <PropertiesHeader>
      属性
      <button aria-label="关闭">
        <svg width="12" height="12" viewBox="0 0 12 12" aria-hidden="true">
          <path d="M1.500 1.500l9 9M10.500 1.500l-9 9" stroke="#111" strokeWidth="2" />
        </svg>
      </button>
    </PropertiesHeader>
    <TypeSelector>
      <TypeThumb>
        <CurtainWallIcon size={74} />
      </TypeThumb>
      <TypeName>幕墙</TypeName>
      <Triangle size={10} />
    </TypeSelector>
    <MenuAnchor>
      <TypeDropdown />
    </MenuAnchor>
  </Properties>
);

const DrawingView = () => (
  <ViewPane>
    <Drawing>
      <svg width="415" height="774" viewBox="281 210 415 774" aria-label="立面标记" shapeRendering="crispEdges">
        <circle cx="530.500" cy="482" r="18.500" fill="none" stroke="#111" />
        <path d="M543 468l14 14-8 8-1-1q3-11-5-21z" fill="#111" />
        <path d="M557 482l-14 14" stroke="#111" />
        <path d="M528 483.500h2M560 482.500h2M675 586.500h21" stroke="#111" />
      </svg>
    </Drawing>
    <ViewControls>
      <ScaleButton>1:100</ScaleButton>
      {viewGlyphs.map((glyph, i) => (
        <ViewControl key={i} aria-label={`视图控制 ${i + 1}`}>
          <Icon x={192 + i * 84} y={42} w={28} h={9}>
            {glyph}
          </Icon>
        </ViewControl>
      ))}
    </ViewControls>
  </ViewPane>
);

const App = () => (
  <>
    <GlobalStyle />
    <Shell>
      <TitleBar>
        <QuickToolbar />
      </TitleBar>
      <AppMenuButton aria-label="应用程序菜单">
        <RevitLogo />
      </AppMenuButton>
      <Tabs>
        {tabs.map(name => (
          <Tab key={name}>{name}</Tab>
        ))}
      </Tabs>
      <RibbonPanels />
      <Options />
      <Workspace>
        <PropertiesPalette />
        <DrawingView />
      </Workspace>
      <Markup width="696" height="993" viewBox="0 0 696 993" fill={colors.red} aria-hidden="true">
        <path d="M166 277l18 1-5 4 58 43 81 58 162 126-1 1-161-117-93-68-50-38-2 7z" />
        <path d="M241 801l8-18 3 6 78-59 240-170 1 1-241 178-74 55 3 3z" />
      </Markup>
    </Shell>
  </>
);

export default App;
